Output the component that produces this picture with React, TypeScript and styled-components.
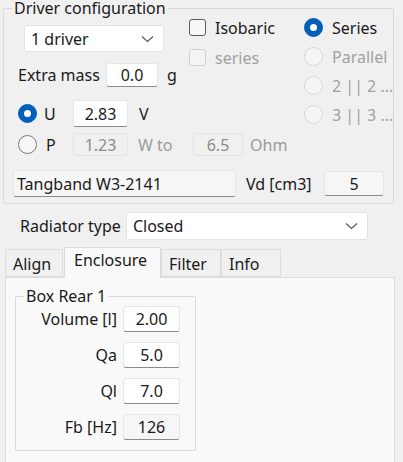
import React from 'react';
import styled, { createGlobalStyle } from 'styled-components';

const GlobalStyle = createGlobalStyle`
  html, body {
    margin: 0;
    padding: 0;
    background: #f0f0f0;
  }
  body {
    font-family: "Noto Sans", "Noto Sans CJK JP", sans-serif;
    font-size: 16px;
    color: #1a1a1a;
  }
`;

const Window = styled.div`
  width: 403px;
  height: 462px;
  overflow: hidden;
  background: #f0f0f0;
  position: relative;
`;

const Group = styled.fieldset<{ $width: number; $height: number }>`
  box-sizing: border-box;
  margin: 0;
  width: ${(p) => p.$width}px;
  height: ${(p) => p.$height}px;
  border: 1px solid #dadada;
  border-radius: 2px;
  padding: 0;
`;

const Legend = styled.legend`
  margin-left: 8px;
  padding: 0 2px;
  line-height: 17px;
  height: 17px;
`;

const DriverGroup = styled(Group)`
  margin: 0 0 0 3px;
  display: flex;
  flex-direction: column;
`;

const TopSection = styled.div`
  display: flex;
  margin-top: 1px;
`;

const LeftCol = styled.div`
  width: 171px;
  padding-left: 14px;
  padding-top: 7px;
  display: flex;
  flex-direction: column;
`;

const CheckCol = styled.div`
  width: 115px;
  display: flex;
  flex-direction: column;
  gap: 11px;
`;

const RadioCol = styled.div`
  display: flex;
  flex-direction: column;
  gap: 10px;
`;

const Row = styled.div<{ $mt?: number; $gap?: number }>`
  display: flex;
  align-items: center;
  margin-top: ${(p) => p.$mt ?? 0}px;
  gap: ${(p) => p.$gap ?? 0}px;
`;

const Select = styled.div<{ $width: number }>`
  box-sizing: border-box;
  width: ${(p) => p.$width}px;
  height: 27px;
  background: #fff;
  border: 1px solid #e3e3e3;
  border-radius: 3px;
  display: flex;
  align-items: center;
  justify-content: space-between;
  padding: 0 9px 0 6px;
`;

const Field = styled.div<{ $width: number; $height?: number; $variant?: 'normal' | 'disabled' | 'readonly' }>`
  box-sizing: border-box;
  width: ${(p) => p.$width}px;
  height: ${(p) => p.$height ?? 26}px;
  display: flex;
  align-items: center;
  justify-content: center;
  border-radius: 3px;
  border: 1px solid ${(p) => (p.$variant === 'disabled' ? '#e4e4e4' : '#e6e6e6')};
  border-bottom-color: ${(p) => (p.$variant === 'disabled' ? '#e4e4e4' : '#8a8a8a')};
  background: ${(p) =>
    p.$variant === 'disabled' ? '#f0f0f0' : p.$variant === 'readonly' ? '#f6f6f6' : '#ffffff'};
  color: ${(p) => (p.$variant === 'disabled' ? '#8c8c8c' : '#1a1a1a')};
`;

const Label = styled.span<{ $muted?: boolean; $width?: number; $align?: string }>`
  color: ${(p) => (p.$muted ? '#9a9a9a' : '#1a1a1a')};
  white-space: nowrap;
  ${(p) => (p.$width ? `width: ${p.$width}px;` : '')}
  ${(p) => (p.$align ? `text-align: ${p.$align};` : '')}
`;

const Option = styled.div<{ $muted?: boolean }>`
  display: flex;
  align-items: center;
  gap: 9px;
  height: 19px;
  color: ${(p) => (p.$muted ? '#a0a0a0' : '#1a1a1a')};
  white-space: nowrap;
`;

const CheckBox = styled.span<{ $disabled?: boolean }>`
  box-sizing: border-box;
  width: 17px;
  height: 17px;
  border-radius: 3px;
  border: 1px solid ${(p) => (p.$disabled ? '#d2d2d2' : '#5c5c5c')};
  background: ${(p) => (p.$disabled ? '#f4f4f4' : '#f7f7f7')};
`;

const Radio = styled.span<{ $checked?: boolean; $disabled?: boolean }>`
  box-sizing: border-box;
  width: 19px;
  height: 19px;
  border-radius: 50%;
  flex: none;
  display: flex;
  align-items: center;
  justify-content: center;
  background: ${(p) => (p.$checked ? '#005fb8' : p.$disabled ? '#f5f5f5' : '#f7f7f7')};
  border: 1px solid ${(p) => (p.$checked ? '#005fb8' : p.$disabled ? '#d6d6d6' : '#7a7a7a')};
  &::after {
    content: '';
    display: ${(p) => (p.$checked ? 'block' : 'none')};
    width: 7px;
    height: 7px;
    border-radius: 50%;
    background: #fff;
  }
`;

const RadiatorRow = styled(Row)`
  margin: 8px 0 0 20px;
  gap: 5px;
`;

const Tabs = styled.div`
  margin: 7px 0 0 5px;
  display: flex;
  align-items: flex-end;
  height: 30px;
`;

const Tab = styled.div<{ $active?: boolean; $width: number }>`
  box-sizing: border-box;
  width: ${(p) => p.$width}px;
  height: ${(p) => (p.$active ? 31 : 28)}px;
  margin-bottom: ${(p) => (p.$active ? -1 : 0)}px;
  padding: ${(p) => (p.$active ? '1px 0 0 9px' : '3px 0 0 7px')};
  background: ${(p) => (p.$active ? '#f9f9f9' : '#f0f0f0')};
  border: 1px solid #dcdcdc;
  border-bottom: ${(p) => (p.$active ? 'none' : '1px solid #dcdcdc')};
  margin-left: ${(p) => (p.$active ? 1 : 0)}px;
  position: relative;
  z-index: ${(p) => (p.$active ? 1 : 0)};
  white-space: nowrap;
`;

const Panel = styled.div`
  box-sizing: border-box;
  margin-left: 5px;
  width: 390px;
  height: 200px;
  border: 1px solid #dcdcdc;
  background: #f9f9f9;
  padding: 10px 0 0 9px;
`;

const BoxGroup = styled(Group)`
  display: flex;
  flex-direction: column;
  gap: 10px;
  padding: 1px 0 0 0;
`;

const BoxRow = styled.div`
  display: flex;
  align-items: center;
  gap: 6px;
`;

const Chevron = () => (
  <svg width="13" height="8" viewBox="0 0 13 8">
    <path d="M1 1.5 L6.5 6.5 L12 1.5" fill="none" stroke="#555" strokeWidth="1.1" />
  </svg>
);

export default function App() {
  return (
    <>
      <GlobalStyle />
      <Window>
        <DriverGroup $width={389} $height={204}>
          <Legend>Driver configuration</Legend>
          <TopSection>
            <LeftCol>
              <Select $width={140} style={{ marginLeft: 6 }}>
                <span>1 driver</span>
                <Chevron />
              </Select>
              <Row $mt={11}>
                <Label $width={88}>Extra mass</Label>
                <Field $width={52} $height={24}>0.0</Field>
                <Label style={{ marginLeft: 9 }}>g</Label>
              </Row>
              <Row $mt={13}>
                <Radio $checked />
                <Label style={{ marginLeft: 7, width: 29 }}>U</Label>
                <Field $width={55} $height={27}>2.83</Field>
                <Label style={{ marginLeft: 11 }}>V</Label>
              </Row>
            </LeftCol>
            <CheckCol>
              <Option>
                <CheckBox />
                Isobaric
              </Option>
              <Option $muted>
                <CheckBox $disabled />
                series
              </Option>
            </CheckCol>
            <RadioCol>
              <Option>
                <Radio $checked />
                Series
              </Option>
              <Option $muted>
                <Radio $disabled />
                Parallel
              </Option>
              <Option $muted>
                <Radio $disabled />
                2 || 2 ...
              </Option>
              <Option $muted>
                <Radio $disabled />
                3 || 3 ...
              </Option>
            </RadioCol>
          </TopSection>
          <Row $mt={6} style={{ paddingLeft: 14 }}>
            <Radio />
            <Label style={{ marginLeft: 9, width: 27 }}>P</Label>
            <Field $width={55} $height={23} $variant="disabled">1.23</Field>
            <Label $muted style={{ marginLeft: 10, width: 55 }}>W to</Label>
            <Field $width={50} $height={23} $variant="disabled">6.5</Field>
            <Label $muted style={{ marginLeft: 7 }}>Ohm</Label>
          </Row>
          <Row $mt={14} style={{ paddingLeft: 9 }}>
            <Field $width={223} $height={27} $variant="readonly" style={{ justifyContent: 'flex-start', paddingLeft: 3 }}>
              Tangband W3-2141
            </Field>
            <Label style={{ marginLeft: 10, width: 78 }}>Vd [cm3]</Label>
            <Field $width={60} $height={25} $variant="readonly">5</Field>
          </Row>
        </DriverGroup>
        <RadiatorRow>
          <Label>Radiator type</Label>
          <Select $width={242} style={{ height: 28 }}>
            <span>Closed</span>
            <Chevron />
          </Select>
        </RadiatorRow>
        <Tabs>
          <Tab $width={58}>Align</Tab>
          <Tab $width={97} $active>Enclosure</Tab>
          <Tab $width={60}>Filter</Tab>
          <Tab $width={60}>Info</Tab>
        </Tabs>
        <Panel>
          <BoxGroup $width={181} $height={163}>
            <Legend>Box Rear 1</Legend>
            <BoxRow>
              <Label $width={101} $align="right">Volume [l]</Label>
              <Field $width={57}>2.00</Field>
            </BoxRow>
            <BoxRow>
              <Label $width={101} $align="right">Qa</Label>
              <Field $width={57}>5.0</Field>
            </BoxRow>
            <BoxRow>
              <Label $width={101} $align="right">Ql</Label>
              <Field $width={57}>7.0</Field>
            </BoxRow>
            <BoxRow>
              <Label $width={101} $align="right">Fb [Hz]</Label>
              <Field $width={57} $variant="readonly">126</Field>
            </BoxRow>
          </BoxGroup>
        </Panel>
      </Window>
    </>
  );
}
